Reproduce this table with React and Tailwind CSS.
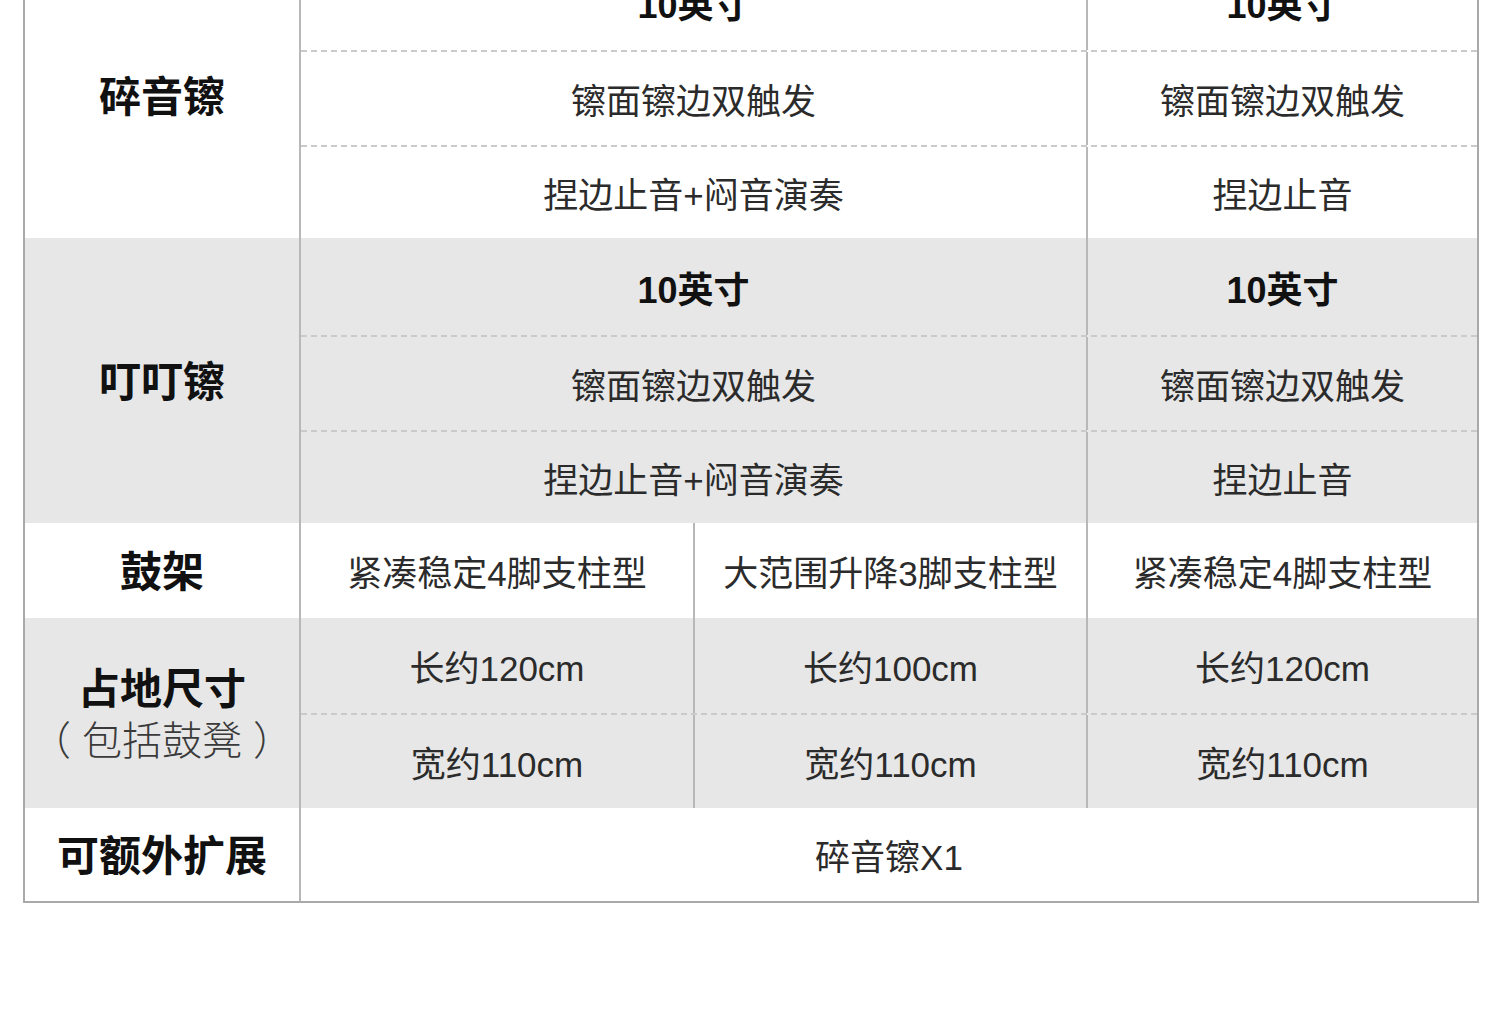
import React from 'react';

const FONT = { fontFamily: '"Liberation Sans", "Noto Sans CJK SC", "Noto Sans", sans-serif' };

const GREY = 'bg-[#e7e7e7]';
const WHITE = 'bg-white';

function Label({ children, sub }) {
  return (
    <div className="w-[276px] shrink-0 flex flex-col items-center justify-center pt-[4px] border-r-2 border-[#b8b8b8]">
      <p className="text-[42px] leading-[46px] font-bold text-[#111]">{children}</p>
      {sub && <p className="mt-[6px] text-[40px] leading-[44px] font-light text-[#3a3a3a]">（ 包括鼓凳 ）</p>}
    </div>
  );
}

function Cell({ children, bold, className = '' }) {
  return (
    <div className={`flex items-center justify-center pt-[8px] ${className}`}>
      <span className={bold ? 'text-[36px] font-bold text-[#111]' : 'text-[35px] text-[#2b2b2b]'}>{children}</span>
    </div>
  );
}

function SubRow({ cells, first, h }) {
  const grid = cells.length === 2
    ? 'grid-cols-[785px_1fr]'
    : 'grid-cols-[392px_393px_1fr]';
  return (
    <div className={`grid ${grid} ${h} ${first ? '' : 'border-t-2 border-dashed border-[#cacaca]'}`}>
      {cells.map((c, i) => (
        <Cell
          key={i}
          bold={c.bold}
          className={i > 0 ? 'border-l-2 border-[#b8b8b8]' : ''}
        >
          {c.t}
        </Cell>
      ))}
    </div>
  );
}

function Group({ label, sub, bg, rows, heights }) {
  return (
    <div className={`flex ${bg}`}>
      <Label sub={sub}>{label}</Label>
      <div className="flex-1 flex flex-col">
        {rows.map((r, i) => (
          <SubRow key={i} cells={r} first={i === 0} h={heights[i]} />
        ))}
      </div>
    </div>
  );
}

const cymbalRows = [
  [{ t: '10英寸', bold: true }, { t: '10英寸', bold: true }],
  [{ t: '镲面镲边双触发' }, { t: '镲面镲边双触发' }],
  [{ t: '捏边止音+闷音演奏' }, { t: '捏边止音' }],
];

export default function App() {
  return (
    <div className="w-[1500px] h-[1019px] overflow-hidden bg-white" style={FONT}>
      <div className="ml-[23px] w-[1456px] -mt-[48px] border-2 border-[#a9a9a9]">
        <Group
          label="碎音镲"
          bg={WHITE}
          rows={cymbalRows}
          heights={['h-[96px]', 'h-[95px]', 'h-[93px]']}
        />
        <Group
          label="叮叮镲"
          bg={GREY}
          rows={cymbalRows}
          heights={['h-[97px]', 'h-[95px]', 'h-[93px]']}
        />
        <Group
          label="鼓架"
          bg={WHITE}
          rows={[[{ t: '紧凑稳定4脚支柱型' }, { t: '大范围升降3脚支柱型' }, { t: '紧凑稳定4脚支柱型' }]]}
          heights={['h-[95px]']}
        />
        <Group
          label="占地尺寸"
          sub
          bg={GREY}
          rows={[
            [{ t: '长约120cm' }, { t: '长约100cm' }, { t: '长约120cm' }],
            [{ t: '宽约110cm' }, { t: '宽约110cm' }, { t: '宽约110cm' }],
          ]}
          heights={['h-[95px]', 'h-[95px]']}
        />
        <div className={`flex ${WHITE} h-[93px]`}>
          <Label>可额外扩展</Label>
          <Cell className="flex-1">碎音镲X1</Cell>
        </div>
      </div>
    </div>
  );
}
